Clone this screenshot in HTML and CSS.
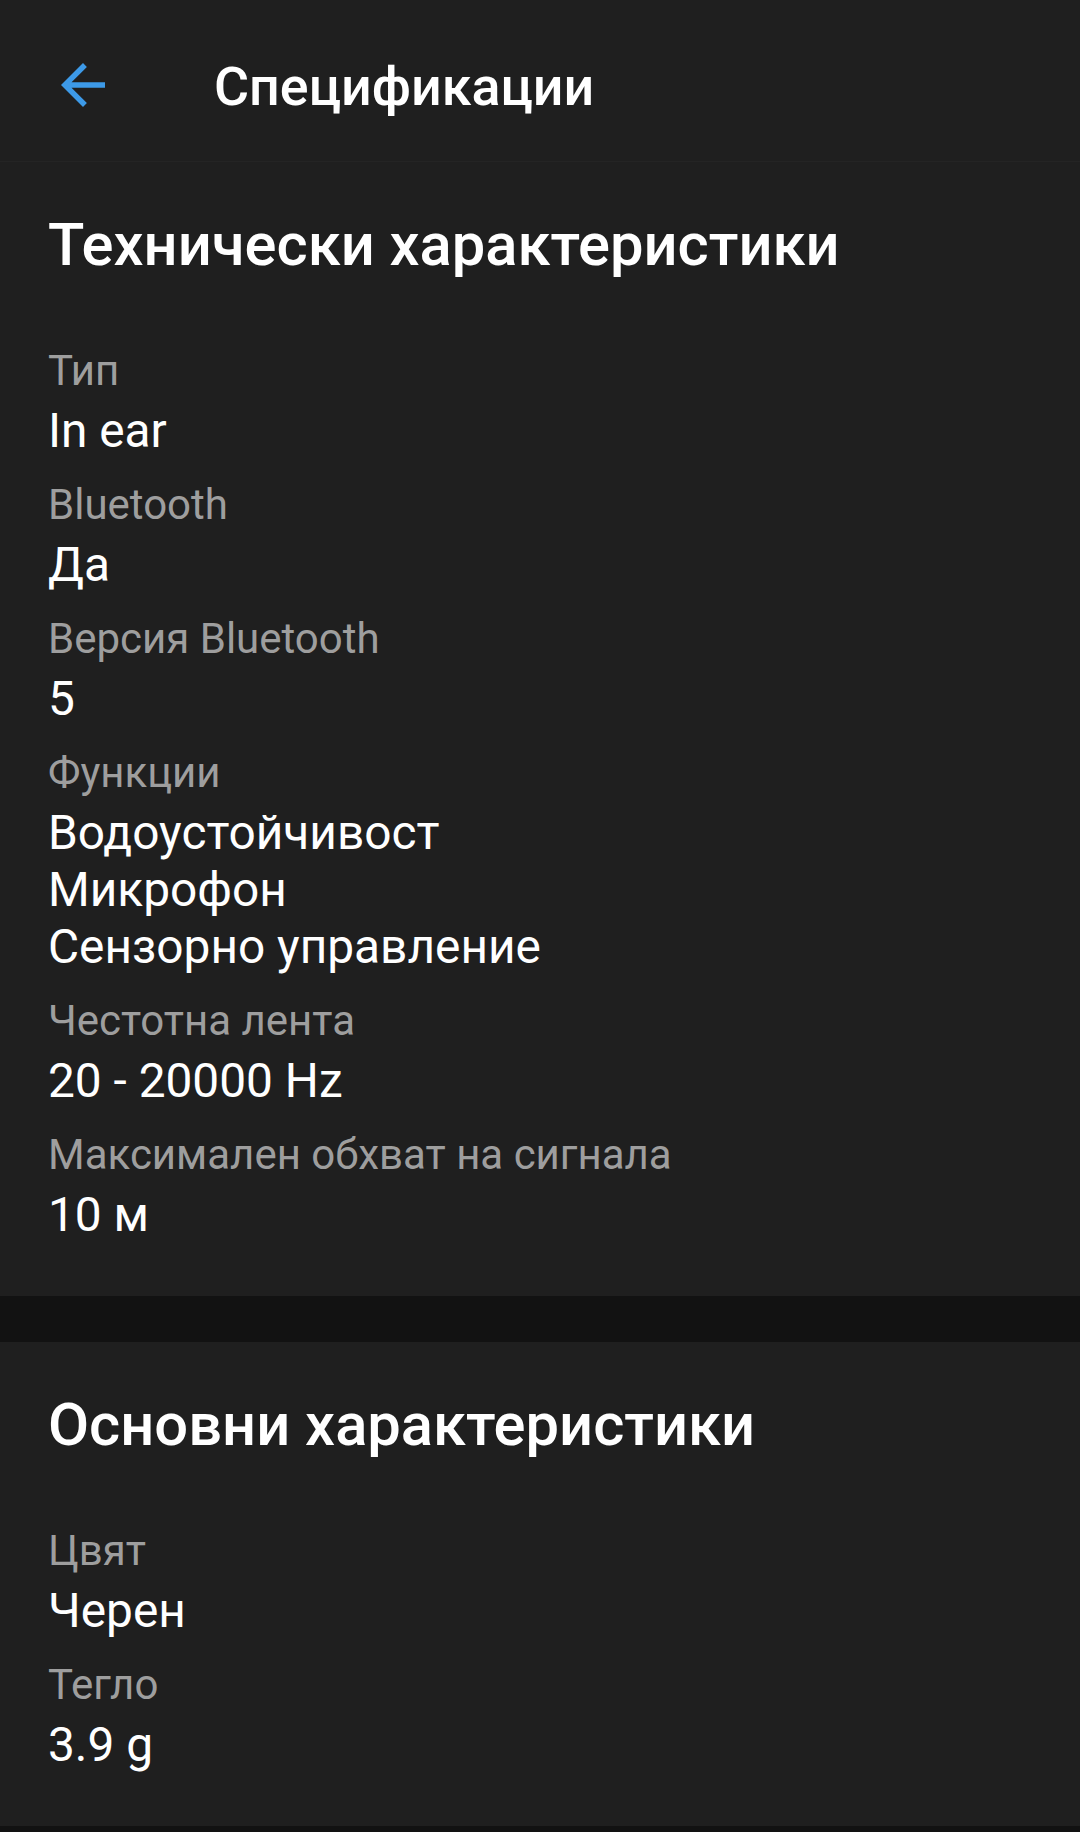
FILE: index.html
```html
<!DOCTYPE html>
<html lang="bg">
<head>
<meta charset="utf-8">
<title>Спецификации</title>
<link rel="stylesheet" href="styles.css">
</head>
<body>
<header class="topbar">
  <svg class="back" viewBox="0 0 24 24" aria-hidden="true"><path d="M20 11H7.83l5.59-5.59L12 4l-8 8 8 8 1.41-1.41L7.83 13H20v-2z"/></svg>
  <h1 class="title">Спецификации</h1>
</header>
<main>
  <section class="card">
    <h2 class="heading">Технически характеристики</h2>
    <div class="list">
      <div class="item"><div class="label">Тип</div><div class="value">In ear</div></div>
      <div class="item"><div class="label">Bluetooth</div><div class="value">Да</div></div>
      <div class="item"><div class="label">Версия Bluetooth</div><div class="value">5</div></div>
      <div class="item"><div class="label">Функции</div><div class="value">Водоустойчивост</div><div class="value">Микрофон</div><div class="value">Сензорно управление</div></div>
      <div class="item"><div class="label">Честотна лента</div><div class="value">20 - 20000 Hz</div></div>
      <div class="item"><div class="label">Максимален обхват на сигнала</div><div class="value">10 м</div></div>
    </div>
  </section>
  <section class="card">
    <h2 class="heading">Основни характеристики</h2>
    <div class="list">
      <div class="item"><div class="label">Цвят</div><div class="value">Черен</div></div>
      <div class="item"><div class="label">Тегло</div><div class="value">3.9 g</div></div>
    </div>
  </section>
</main>
</body>
</html>
```
FILE: styles.css
```css
* { box-sizing: border-box; margin: 0; padding: 0; }
html, body { background: #121212; }
body {
  font-family: Roboto, "Noto Sans", "Liberation Sans", sans-serif;
  color: #ffffff;
  width: 1080px;
}
.topbar {
  height: 162px;
  background: #1f1f1f;
  border-bottom: 1px solid #242424;
  display: flex;
  align-items: center;
  padding: 12px 0 0 50px;
}
.back {
  width: 66px;
  height: 66px;
  fill: #3d9ae8;
  flex: none;
  margin-top: -4px;
}
.title {
  font-size: 53.8px;
  font-weight: 500;
  margin-left: 98px;
  line-height: 62px;
  color: #ffffff;
}
.card {
  background: #1f1f1f;
  padding: 46px 48px 52px;
  margin-bottom: 46px;
}
.card:last-child { margin-bottom: 0; }
.heading {
  font-size: 59.7px;
  font-weight: 500;
  line-height: 74px;
  margin-bottom: 61px;
}
.list {
  display: flex;
  flex-direction: column;
  gap: 17px;
}
.label {
  font-size: 42px;
  line-height: 56px;
  color: #9e9e9e;
  margin-bottom: 4px;
}
.value {
  font-size: 47.8px;
  line-height: 57px;
  color: #ffffff;
}
```
